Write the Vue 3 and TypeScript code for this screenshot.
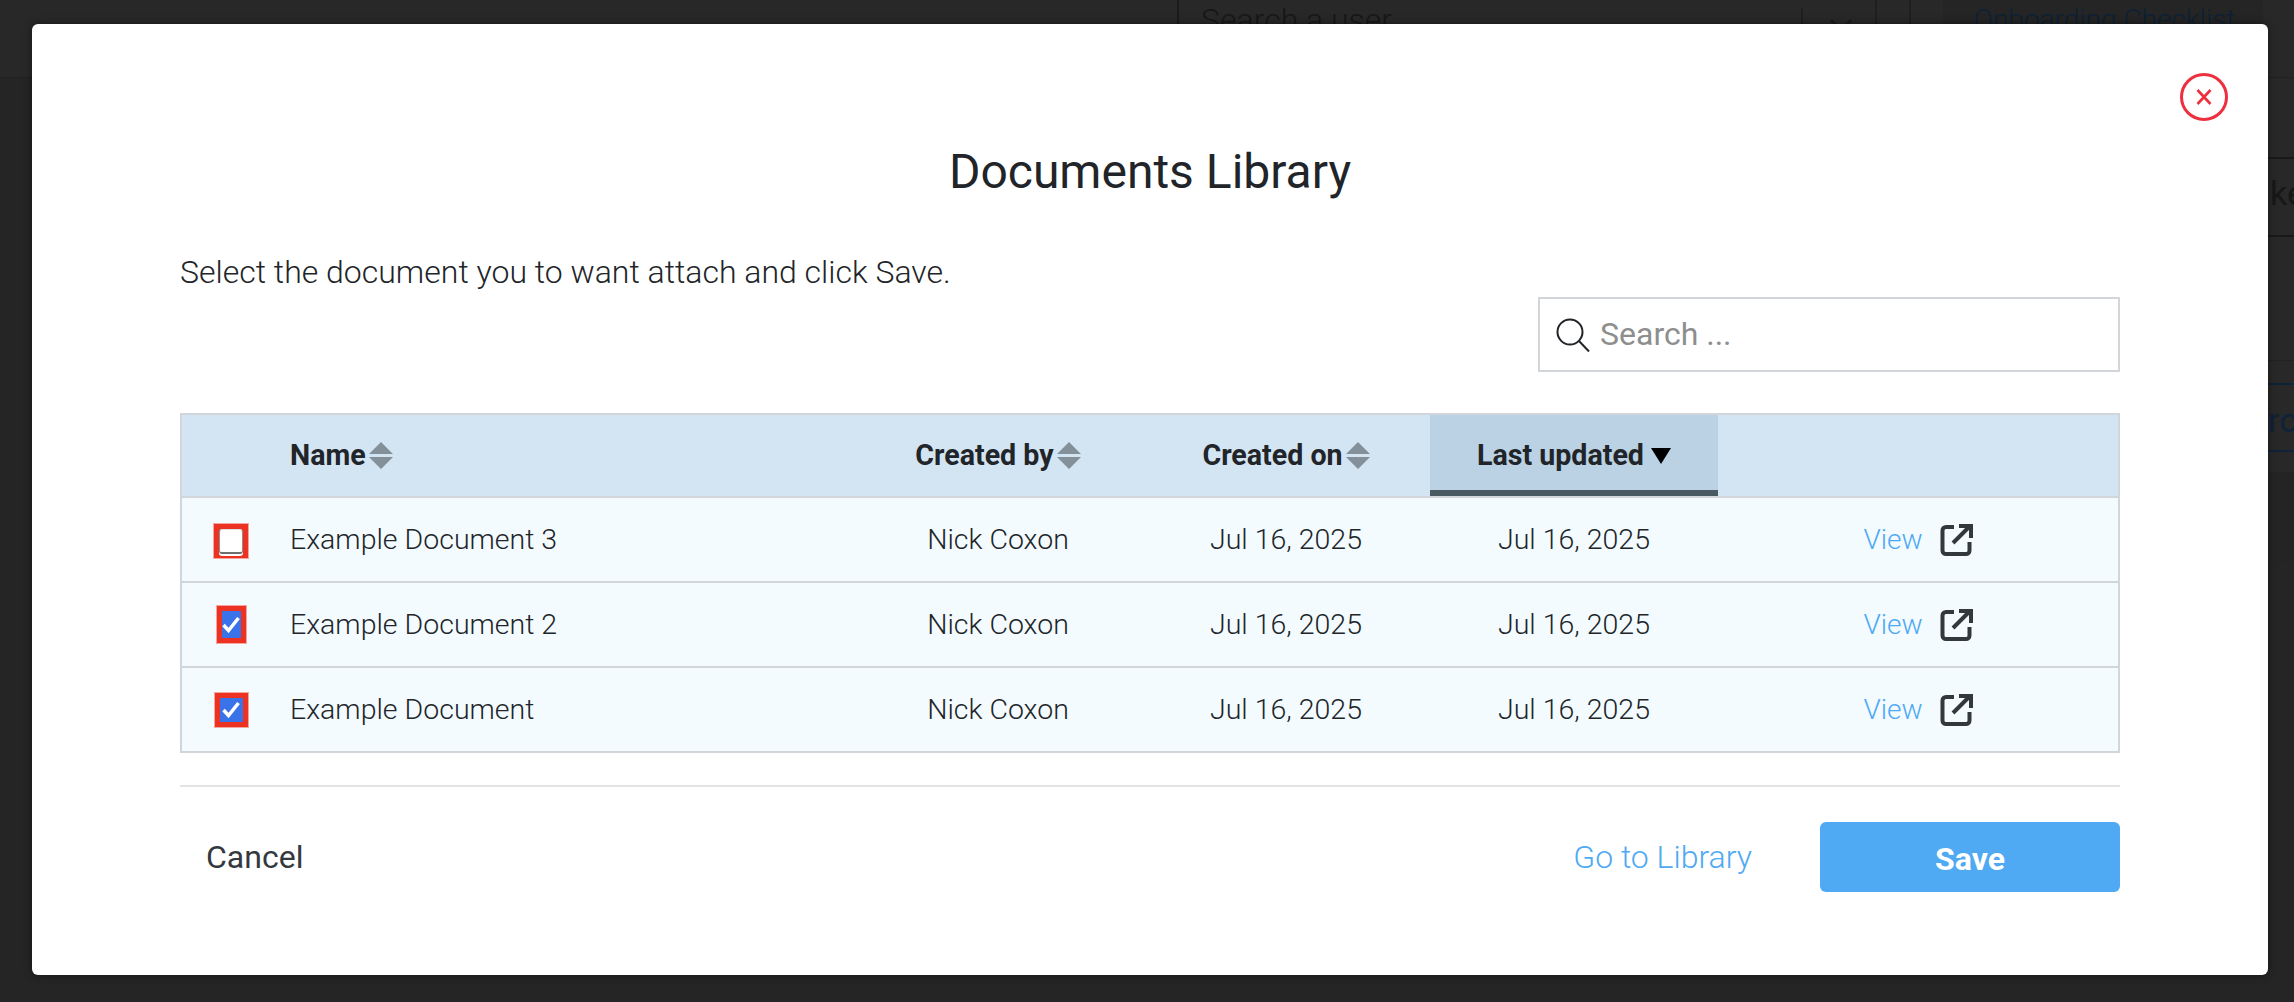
<script setup lang="ts">
interface Doc {
  name: string
  state: 'empty' | 'tall' | 'wide'
}
const docs: Doc[] = [
  { name: 'Example Document 3', state: 'empty' },
  { name: 'Example Document 2', state: 'tall' },
  { name: 'Example Document', state: 'wide' },
]
const sortable = [
  { label: 'Name', cls: 'left' },
  { label: 'Created by', cls: '' },
  { label: 'Created on', cls: '' },
]
</script>

<template>
  <div class="page">
    <header class="behind-top">
      <div class="behind-search">
        <span>Search a user</span>
        <i class="behind-sep"></i>
        <svg class="behind-chevron" width="24" height="14" viewBox="0 0 24 14"><path d="M2 2l10 10L22 2" fill="none" stroke="#1c1c1c" stroke-width="3" /></svg>
      </div>
      <div class="behind-gap"></div>
      <div class="behind-link">Onboarding Checklist</div>
    </header>
    <aside class="behind-side">
      <div class="side-a"></div>
      <div class="side-b">ke</div>
      <div class="side-c"></div>
      <div class="side-d"></div>
      <div class="side-e">ro</div>
      <div class="side-f"></div>
      <div class="side-g"></div>
    </aside>

    <section class="modal">
      <button class="close" aria-label="Close">
        <svg width="50" height="50" viewBox="0 0 50 50">
          <circle cx="25" cy="25" r="22.5" fill="none" stroke="#ee2f3d" stroke-width="3" />
          <path d="M18.500 18l13 14M31.500 18l-13 14" fill="none" stroke="#ee2f3d" stroke-width="2.6" />
        </svg>
      </button>
      <h1 class="title">Documents Library</h1>
      <p class="intro">Select the document you to want attach and click Save.</p>
      <div class="search-row">
        <label class="search">
          <svg width="34" height="34" viewBox="0 0 34 34">
            <circle cx="14" cy="14" r="12.5" fill="none" stroke="#212529" stroke-width="2" />
            <path d="M23 23l10 10.5" fill="none" stroke="#212529" stroke-width="2" />
          </svg>
          <span>Search ...</span>
        </label>
      </div>

      <div class="table">
        <div class="row head">
          <div></div>
          <div v-for="c in sortable" :key="c.label" class="th" :class="c.cls">
            <span class="th-label">{{ c.label }}</span>
            <svg width="24" height="27" viewBox="0 0 24 27">
              <path d="M12 0l12 12H0zM0 15h24L12 27z" fill="#83909a" />
            </svg>
          </div>
          <div class="th active">
            <span class="th-label">Last updated</span>
            <svg width="20" height="16" viewBox="0 0 20 16"><path d="M0 0h20L10 16z" fill="#000" /></svg>
          </div>
          <div></div>
        </div>
        <div v-for="d in docs" :key="d.name" class="row body">
          <div class="check-cell">
            <span class="mark" :class="d.state">
              <span class="box" :class="{ on: d.state !== 'empty' }">
                <svg v-if="d.state !== 'empty'" width="18" height="17" viewBox="0 0 18 17">
                  <path d="M1.500 9l5 5.500L16.500 2" fill="none" stroke="#fff" stroke-width="3.500" />
                </svg>
              </span>
            </span>
          </div>
          <div class="td left">{{ d.name }}</div>
          <div class="td">Nick Coxon</div>
          <div class="td">Jul 16, 2025</div>
          <div class="td">Jul 16, 2025</div>
          <div class="td view">
            <a>View</a>
            <svg width="33" height="33" viewBox="0 0 33 33">
              <path d="M14 4H6a3.500 3.500 0 0 0-3.500 3.500v20A3.500 3.500 0 0 0 6 31h20a3.500 3.500 0 0 0 3.500-3.500V19" fill="none" stroke="#33383d" stroke-width="4" />
              <path d="M13 20L29 4M19 3h12v12" fill="none" stroke="#33383d" stroke-width="4" />
            </svg>
          </div>
        </div>
      </div>

      <footer class="footer">
        <a class="cancel">Cancel</a>
        <a class="library">Go to Library</a>
        <button class="save">Save</button>
      </footer>
    </section>
  </div>
</template>

<style>
html, body { margin: 0; background: #262626; }
</style>

<style scoped>
.page {
  position: relative;
  width: 2294px;
  height: 1002px;
  overflow: hidden;
  background: #252525;
  font-family: Roboto, "Liberation Sans", sans-serif;
  color: #212529;
}
.behind-top {
  display: flex;
  height: 77px;
  padding-left: 1177px;
  background: #282828;
  border-bottom: 1px solid #212121;
  font-size: 32px;
  font-weight: 300;
  line-height: 36px;
  color: #171717;
}
.behind-search {
  display: flex;
  box-sizing: border-box;
  width: 700px;
  padding-left: 22px;
  border-left: 2px solid #1b1b1b;
  border-right: 2px solid #1f1f1f;
}
.behind-search span { width: 600px; padding-top: 2px; flex: none; }
.behind-sep { width: 2px; height: 60px; margin-top: 8px; background: #1f1f1f; flex: none; }
.behind-chevron { margin: 18px 0 0 26px; flex: none; }
.behind-gap { width: 34px; box-sizing: border-box; border-right: 2px solid #1f1f1f; }
.behind-link {
  width: 289px;
  margin-left: 32px;
  padding: 2px 0 0 31px;
  background: #252525;
  color: #0c2136;
  white-space: nowrap;
  font-weight: 300;
  font-size: 28px;
}
.behind-side {
  position: absolute;
  left: 2268px;
  top: 78px;
  width: 26px;
  overflow: hidden;
  font-size: 34px;
  color: #171717;
}
.side-a { height: 79px; border-bottom: 2px solid #191919; background: #282828; }
.side-b { height: 76px; line-height: 68px; padding-left: 2px; border-bottom: 2px solid #191919; background: #282828; }
.side-c { height: 123px; border-bottom: 1px solid #222; background: #282828; }
.side-d { height: 22px; border-bottom: 2px solid #0e2238; background: #282828; }
.side-e { height: 65px; line-height: 70px; color: #0e2238; border-bottom: 2px solid #0e2238; background: #282828; }
.side-f { height: 20px; background: #282828; }
.side-g { height: 90px; background: #242424; }

.modal {
  position: absolute;
  left: 32px;
  top: 24px;
  width: 2236px;
  height: 951px;
  box-sizing: border-box;
  padding: 120px 148px 0;
  background: #fff;
  border-radius: 6px;
  box-shadow: 0 0 8px rgba(0, 0, 0, 0.45);
}
.close {
  position: absolute;
  top: 48px;
  right: 39px;
  padding: 0;
  width: 50px;
  height: 50px;
  border: 0;
  background: none;
}
.close svg { display: block; }
.title {
  margin: 0;
  font-size: 48px;
  font-weight: 400;
  line-height: 56px;
  text-align: center;
  color: #212529;
}
.intro {
  margin: 52px 0 0;
  font-size: 32px;
  font-weight: 300;
  line-height: 40px;
}
.search-row {
  display: flex;
  justify-content: flex-end;
  margin-top: 5px;
}
.search {
  display: flex;
  align-items: center;
  gap: 10px;
  width: 582px;
  height: 75px;
  box-sizing: border-box;
  padding: 0 0 0 16px;
  border: 2px solid #d2d5da;
  font-size: 32px;
  font-weight: 400;
  color: #8e8e8e;
}
.search span { margin-bottom: 2px; }
.table {
  margin-top: 41px;
  border: 2px solid #d2d6da;
  width: 1940px;
  box-sizing: border-box;
}
.row {
  display: grid;
  grid-template-columns: 108px 564px 288px 288px 288px 1fr;
  align-items: stretch;
  box-sizing: border-box;
}
.row + .row { border-top: 2px solid #d2d6da; }
.head { height: 81px; background: #d3e4f3; }
.body { height: 85px; background: #f3fbff; }
.th {
  display: flex;
  align-items: center;
  justify-content: center;
  gap: 3px;
  font-size: 28.600px;
  font-weight: 700;
}
.th-label { margin-bottom: 2px; }
.th.left, .td.left { justify-content: flex-start; }
.th.active {
  gap: 7px;
  background: #bbd1e4;
  border-bottom: 6px solid #4a5a62;
  box-sizing: border-box;
  padding-top: 6px;
}
.td {
  display: flex;
  align-items: center;
  justify-content: center;
  padding-bottom: 1px;
  font-size: 28.500px;
  font-weight: 300;
}
.view { gap: 17px; font-size: 28px; }
.view a { color: #4fa9f3; }
.check-cell {
  display: flex;
  align-items: center;
  justify-content: center;
}
.mark {
  display: flex;
  align-items: center;
  justify-content: center;
  box-sizing: border-box;
  background: #ec3323;
  box-shadow: 0 0 0 1px #f4a79e inset;
}
.mark.empty { width: 36px; height: 36px; margin: 3px 10px 0 0; }
.mark.tall { width: 31px; height: 39px; margin-right: 10px; }
.mark.wide { width: 35px; height: 36px; margin-right: 10px; }
.box {
  display: flex;
  align-items: center;
  justify-content: center;
  background: #fff;
}
.mark.empty .box {
  width: 24px;
  height: 25px;
  box-sizing: border-box;
  border-radius: 3px;
  border: 1px solid #8c8c8c;
  border-top-color: #ddd;
  border-bottom: 2px solid #6f6f6f;
  box-shadow: 0 2px 0 #fff;
}
.box.on { background: #3a72ea; }
.mark.tall .box { width: 19px; height: 27px; }
.mark.wide .box { width: 23px; height: 24px; }
.footer {
  display: flex;
  align-items: center;
  height: 70px;
  margin-top: 69px;
  position: relative;
}
.footer::before {
  content: "";
  position: absolute;
  left: 0;
  right: 0;
  top: -37px;
  height: 2px;
  background: #e4e4e4;
}
.cancel {
  margin-left: 26px;
  font-size: 32px;
  font-weight: 400;
  color: #33393f;
}
.library {
  margin-left: auto;
  margin-right: 68px;
  font-size: 32px;
  font-weight: 300;
  color: #4fa9f3;
}
.save {
  width: 300px;
  height: 70px;
  padding: 4px 0 0;
  border: 0;
  border-radius: 6px;
  background: #4fa9f3;
  font-family: inherit;
  font-size: 32px;
  font-weight: 700;
  color: #fff;
}
</style>
